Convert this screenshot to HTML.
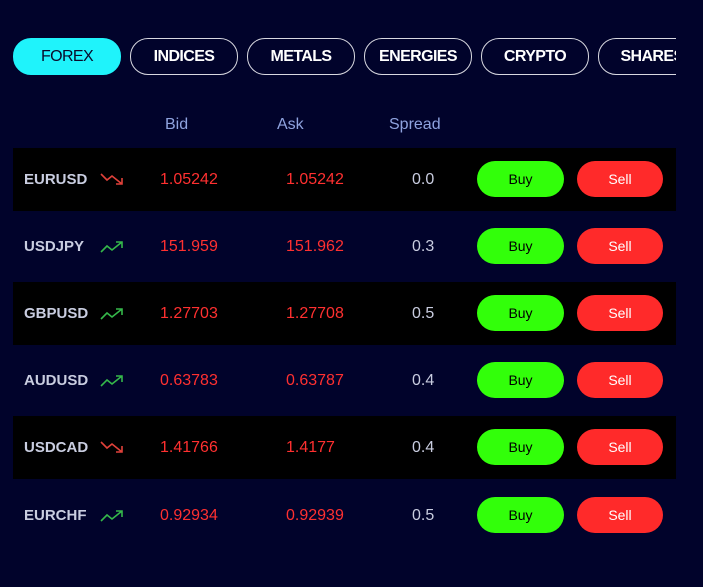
<!DOCTYPE html>
<html><head><style>
body{margin:0;width:703px;height:587px;background:#01032b;font-family:"Liberation Sans",sans-serif;overflow:hidden;position:relative}
.tabs{position:absolute;top:38px;left:13px;width:663px;height:37px;overflow:hidden}
.tab{position:absolute;top:0;width:106px;height:35px;border:1px solid #d8d8e0;border-radius:18px;color:#fff;font-weight:bold;font-size:16px;line-height:35px;text-align:center;letter-spacing:-0.6px}
.tab.on{background:#1ff3fb;border-color:#1ff3fb;color:#0a0a2a;font-weight:normal}
.hd{position:absolute;top:116px;color:#8fa3df;font-size:16px}
.row{position:absolute;left:13px;width:663px;height:63px}
.row.b{background:#000}
.row span{position:absolute;top:0;line-height:63px;font-size:16px}
.sym{left:11px;color:#c9cde0;font-weight:bold;font-size:15px!important}
.bid{left:147px;color:#ff3030}
.ask{left:273px;color:#ff3030}
.spr{left:399px;color:#c9cde0}
.btn{position:absolute;top:13px;width:87px;height:36px;border-radius:18px;text-align:center;line-height:36px;font-size:14px}
.buy{left:464px;background:#32ff0a;color:#000}
.sell{left:564px;background:#ff2a2a;color:#fff;width:86px}
svg{position:absolute;left:87px;top:24px}
</style></head><body>
<div class="tabs">
<div class="tab on" style="left:0">FOREX</div>
<div class="tab" style="left:117px">INDICES</div>
<div class="tab" style="left:234px">METALS</div>
<div class="tab" style="left:351px">ENERGIES</div>
<div class="tab" style="left:468px">CRYPTO</div>
<div class="tab" style="left:585px">SHARES</div>
</div>
<div class="hd" style="left:165px">Bid</div>
<div class="hd" style="left:277px">Ask</div>
<div class="hd" style="left:389px">Spread</div>

<div class="row b" style="top:148px"><span class="sym">EURUSD</span>
<svg width="26" height="16"><path d="M1 2 L7 8 L12 4 L22 12 M16 12 H22 V6" fill="none" stroke="#e0413a" stroke-width="1.6"/></svg>
<span class="bid">1.05242</span><span class="ask">1.05242</span><span class="spr">0.0</span><div class="btn buy">Buy</div><div class="btn sell">Sell</div></div>

<div class="row" style="top:215px"><span class="sym">USDJPY</span>
<svg width="26" height="16"><path d="M1 13 L7 7 L12 11 L22 3 M16 3 H22 V9" fill="none" stroke="#35b84a" stroke-width="1.6"/></svg>
<span class="bid">151.959</span><span class="ask">151.962</span><span class="spr">0.3</span><div class="btn buy">Buy</div><div class="btn sell">Sell</div></div>

<div class="row b" style="top:282px"><span class="sym">GBPUSD</span>
<svg width="26" height="16"><path d="M1 13 L7 7 L12 11 L22 3 M16 3 H22 V9" fill="none" stroke="#35b84a" stroke-width="1.6"/></svg>
<span class="bid">1.27703</span><span class="ask">1.27708</span><span class="spr">0.5</span><div class="btn buy">Buy</div><div class="btn sell">Sell</div></div>

<div class="row" style="top:349px"><span class="sym">AUDUSD</span>
<svg width="26" height="16"><path d="M1 13 L7 7 L12 11 L22 3 M16 3 H22 V9" fill="none" stroke="#35b84a" stroke-width="1.6"/></svg>
<span class="bid">0.63783</span><span class="ask">0.63787</span><span class="spr">0.4</span><div class="btn buy">Buy</div><div class="btn sell">Sell</div></div>

<div class="row b" style="top:416px"><span class="sym">USDCAD</span>
<svg width="26" height="16"><path d="M1 2 L7 8 L12 4 L22 12 M16 12 H22 V6" fill="none" stroke="#e0413a" stroke-width="1.6"/></svg>
<span class="bid">1.41766</span><span class="ask">1.4177</span><span class="spr">0.4</span><div class="btn buy">Buy</div><div class="btn sell">Sell</div></div>

<div class="row" style="top:484px"><span class="sym">EURCHF</span>
<svg width="26" height="16"><path d="M1 13 L7 7 L12 11 L22 3 M16 3 H22 V9" fill="none" stroke="#35b84a" stroke-width="1.6"/></svg>
<span class="bid">0.92934</span><span class="ask">0.92939</span><span class="spr">0.5</span><div class="btn buy">Buy</div><div class="btn sell">Sell</div></div>
</body></html>
